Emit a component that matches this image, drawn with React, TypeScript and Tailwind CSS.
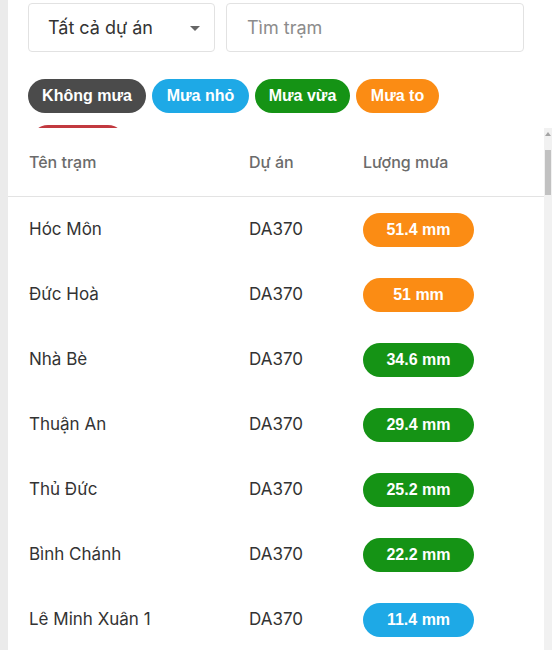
import React from "react";

type Row = { name: string; project: string; value: string; color: string };

const rows: Row[] = [
  { name: "Hóc Môn", project: "DA370", value: "51.4 mm", color: "bg-[#fb8c14]" },
  { name: "Đức Hoà", project: "DA370", value: "51 mm", color: "bg-[#fb8c14]" },
  { name: "Nhà Bè", project: "DA370", value: "34.6 mm", color: "bg-[#159315]" },
  { name: "Thuận An", project: "DA370", value: "29.4 mm", color: "bg-[#159315]" },
  { name: "Thủ Đức", project: "DA370", value: "25.2 mm", color: "bg-[#159315]" },
  { name: "Bình Chánh", project: "DA370", value: "22.2 mm", color: "bg-[#159315]" },
  { name: "Lê Minh Xuân 1", project: "DA370", value: "11.4 mm", color: "bg-[#1ea9e6]" },
];

const chips = [
  { label: "Không mưa", color: "bg-[#4b4b4b] w-[118px]" },
  { label: "Mưa nhỏ", color: "bg-[#1ea9e6] w-[97px]" },
  { label: "Mưa vừa", color: "bg-[#159315] w-[95px]" },
  { label: "Mưa to", color: "bg-[#fb8c14] w-[83px]" },
];

export default function App() {
  return (
    <div
      className="flex h-[650px] w-[552px] overflow-hidden bg-[#ebebeb]"
      style={{ fontFamily: "Inter, 'Noto Sans', sans-serif" }}
    >
      <div className="w-[8px] shrink-0" />
      <div className="flex flex-1 flex-col bg-white">
        <div className="h-[128px] shrink-0 overflow-hidden pl-[20px] pt-[3px]">
          <div className="flex gap-[11px]">
            <div className="flex h-[49px] w-[187px] items-center justify-between rounded-[4px] border border-[#e2e2e2] pl-[19px] pr-[14px]">
              <span className="text-[18px] text-[#333333]">Tất cả dự án</span>
              <svg width="10" height="5" viewBox="0 0 10 5" className="mt-[1px]">
                <path d="M0 0 L10 0 L5 5 Z" fill="#666666" />
              </svg>
            </div>
            <div className="flex h-[49px] w-[298px] items-center rounded-[4px] border border-[#e2e2e2] pl-[20px]">
              <span className="text-[18px] text-[#8c8c8c]">Tìm trạm</span>
            </div>
          </div>
          <div
            className="mt-[27px] flex w-[470px] flex-wrap gap-x-[6px] gap-y-[12px]"
            style={{ fontFamily: "'Liberation Sans', Arial, sans-serif" }}
          >
            {chips.map((c) => (
              <div
                key={c.label}
                className={`flex h-[34px] items-center justify-center rounded-full text-[16px] font-bold text-white ${c.color}`}
              >
                {c.label}
              </div>
            ))}
            <div className="ml-[3px] h-[34px] w-[94px] rounded-full bg-[#c2393f]" />
          </div>
        </div>
        <div className="flex min-h-0 flex-1">
          <div className="flex-1">
            <div className="grid h-[69px] grid-cols-[220px_114px_1fr] items-center border-b border-[#e3e3e3] pl-[21px] text-[16px] font-medium text-[#6b6b6b]">
              <span>Tên trạm</span>
              <span>Dự án</span>
              <span>Lượng mưa</span>
            </div>
            {rows.map((r) => (
              <div
                key={r.name}
                className="grid h-[65px] grid-cols-[220px_114px_1fr] items-center pl-[21px] text-[17px] text-[#333333]"
              >
                <span>{r.name}</span>
                <span>{r.project}</span>
                <span>
                  <span
                    className={`flex h-[34px] w-[111px] items-center justify-center rounded-full text-[16px] font-bold text-white ${r.color}`}
                    style={{ fontFamily: "'Liberation Sans', Arial, sans-serif" }}
                  >
                    {r.value}
                  </span>
                </span>
              </div>
            ))}
          </div>
          <div className="flex w-[8px] shrink-0 flex-col items-center bg-[#f1f1f1]">
            <div className="mt-[4px] h-0 w-0 border-x-[3px] border-b-[4px] border-x-transparent border-b-[#a3a3a3]" />
            <div className="mt-[14px] h-[45px] w-[6px] bg-[#c1c1c1]" />
          </div>
        </div>
      </div>
    </div>
  );
}
